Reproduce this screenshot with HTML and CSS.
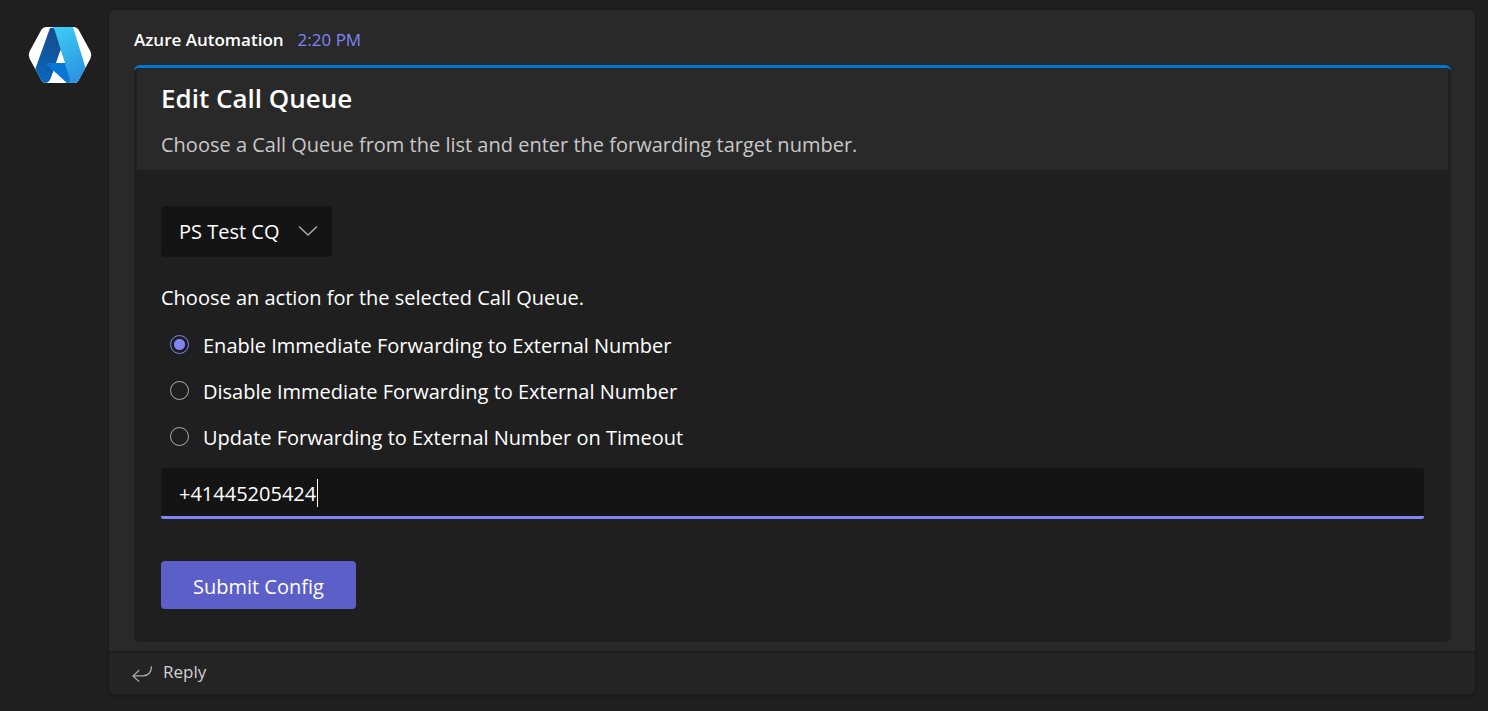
FILE: index.html
```html
<!DOCTYPE html>
<html lang="en">
<head>
<meta charset="utf-8">
<meta name="viewport" content="width=device-width, initial-scale=1">
<title>Azure Automation</title>
<link rel="stylesheet" href="styles.css">
</head>
<body>
<main class="thread">
  <svg class="avatar" viewBox="0 0 64 56" aria-hidden="true">
    <defs>
      <clipPath id="hex"><path d="M18 0H46Q49 0 50.500 2.500L62.500 24.500Q64 28 62.500 31.500L50.500 53.500Q49 56 46 56H18Q15 56 13.500 53.500L1.500 31.500Q0 28 1.500 24.500L13.500 2.500Q15 0 18 0Z"/></clipPath>
      <linearGradient id="dark" x1="0.600" y1="0" x2="0.300" y2="1"><stop offset="0" stop-color="#174b8d"/><stop offset="1" stop-color="#0868bd"/></linearGradient>
      <linearGradient id="light" x1="0.300" y1="0" x2="0.700" y2="1"><stop offset="0" stop-color="#3ccbf4"/><stop offset="1" stop-color="#2b91df"/></linearGradient>
    </defs>
    <g clip-path="url(#hex)">
      <rect width="64" height="56" fill="#fff"/>
      <path d="M22 1H27L34 20L23 51Q21.500 55 18 56H6Q5 46 8 40Z" fill="url(#dark)"/>
      <path d="M25 0H45L57 39Q62 56 54 56H38Q42 54 41 50L27 4Q26 0 22 0Z" fill="url(#light)"/>
      <path d="M28 36L32.500 23L37 36Z" fill="#fff"/>
      <path d="M19 36H37L42 52Q42 55 39 56L19 38Q18 37 19 36Z" fill="#0878d4"/>
      <path d="M25.500 44L38 56H20Q22 54 23 51Z" fill="#fff"/>
    </g>
  </svg>
  <article class="message">
    <div class="message-body">
      <header class="meta"><strong>Azure Automation</strong><time>2:20 PM</time></header>
      <form class="card" onsubmit="return false">
        <header class="card-header">
          <h1>Edit Call Queue</h1>
          <p>Choose a Call Queue from the list and enter the forwarding target number.</p>
        </header>
        <div class="card-content">
          <div class="picker">
            <select aria-label="Call Queue"><option>PS Test CQ</option></select>
            <svg class="chevron" viewBox="0 0 20 12" aria-hidden="true"><path d="M1 1.500L10 10L19 1.500"/></svg>
          </div>
          <fieldset class="actions">
            <legend>Choose an action for the selected Call Queue.</legend>
            <label><input type="radio" name="action" checked><span>Enable Immediate Forwarding to External Number</span></label>
            <label><input type="radio" name="action"><span>Disable Immediate Forwarding to External Number</span></label>
            <label><input type="radio" name="action"><span>Update Forwarding to External Number on Timeout</span></label>
          </fieldset>
          <div class="number-field">
            <input class="number" type="text" aria-label="Forwarding target number" value="+41445205424" autofocus>
            <span class="caret"></span>
          </div>
          <button class="submit" type="submit">Submit Config</button>
        </div>
      </form>
    </div>
    <button class="reply" type="button">
      <svg viewBox="0 0 22 18" aria-hidden="true"><path d="M7.500 5L1 11L7.500 17M1 11H12Q20 10 20.500 1"/></svg>
      <span>Reply</span>
    </button>
  </article>
</main>
</body>
</html>
```

FILE: styles.css
```css
* { box-sizing: border-box; }

body {
  margin: 0;
  background: #1f1f1f;
  color: #fff;
  font: 20px/28px "Segoe UI", "Open Sans", "Noto Sans", sans-serif;
}

button, input, select { font: inherit; color: inherit; }

.thread {
  display: flex;
  align-items: flex-start;
  gap: 17px;
  padding: 10px 13px 16px 28px;
}

.avatar {
  flex: none;
  width: 64px;
  height: 56px;
  margin-top: 17px;
}

.message {
  flex: 1;
  min-width: 0;
  border-radius: 6px;
  background: #292929;
  box-shadow: 0 1px 4px rgba(0, 0, 0, 0.3);
}

.message-body { padding: 16px 24px 9px 25px; }

.meta {
  display: flex;
  gap: 14px;
  margin-bottom: 11px;
  font-size: 17px;
}

.meta strong { font-weight: 600; }
.meta time { color: #7f85f5; }

.card {
  padding: 0 3px;
  overflow: hidden;
  border-top: 3px solid #0078d4;
  border-radius: 6px;
  background: #1f1f1f;
}

.card-header {
  padding: 14px 24px 9px;
  background: #292929;
}

.card-header h1 {
  margin: 0 0 15px;
  font-size: 26px;
  font-weight: 600;
  line-height: 32px;
}

.card-header p {
  margin: 0;
  color: #c8c8c8;
  line-height: 32px;
}

.card-content {
  display: flex;
  flex-direction: column;
  align-items: flex-start;
  padding: 36px 24px 33px;
}

.picker { position: relative; margin-bottom: 24px; }

.picker select {
  appearance: none;
  width: 171px;
  height: 51px;
  padding: 0 48px 0 18px;
  border: 0;
  border-radius: 4px;
  background: #141414;
}

.chevron {
  position: absolute;
  top: 19px;
  right: 14px;
  width: 20px;
  height: 12px;
  fill: none;
  stroke: #adadad;
  stroke-width: 1.5;
  pointer-events: none;
}

.actions {
  display: flex;
  flex-direction: column;
  gap: 14px;
  min-width: 0;
  margin: 0 0 14px;
  padding: 0;
  border: 0;
}

.actions legend {
  padding: 0;
  margin-bottom: 15px;
  line-height: 34px;
}

.actions label {
  display: flex;
  align-items: center;
  gap: 14px;
  padding-left: 9px;
  line-height: 32px;
}

.actions input {
  appearance: none;
  flex: none;
  width: 19px;
  height: 19px;
  margin: 0 0 3px;
  border: 1px solid #adadad;
  border-radius: 50%;
}

.actions input:checked {
  border-color: #7f85f5;
  background: radial-gradient(circle, #7f85f5 5px, transparent 6px);
}

.number-field {
  position: relative;
  display: flex;
  width: 100%;
  margin-bottom: 42px;
}

.number {
  width: 100%;
  height: 51px;
  padding: 3px 18px 0;
  border: 0;
  border-bottom: 3px solid #7f85f5;
  border-radius: 4px 4px 2px 2px;
  outline: 0;
  background: #141414;
  caret-color: transparent;
}

.caret {
  position: absolute;
  top: 11px;
  left: 156px;
  width: 1px;
  height: 28px;
  background: #fff;
}

.submit {
  height: 48px;
  padding: 3px 32px 0;
  border: 0;
  border-radius: 4px;
  background: #5b5fc7;
}

.reply {
  display: flex;
  align-items: center;
  gap: 10px;
  width: 100%;
  height: 43px;
  padding: 0 23px 4px;
  border: 0;
  border-top: 2px solid #1f1f1f;
  border-radius: 0 0 6px 6px;
  background: #242424;
  color: #d0d0d0;
  font-size: 17px;
}

.reply svg {
  width: 21px;
  height: 18px;
  margin-top: 4px;
  fill: none;
  stroke: #adadad;
  stroke-width: 1.3;
}
```
